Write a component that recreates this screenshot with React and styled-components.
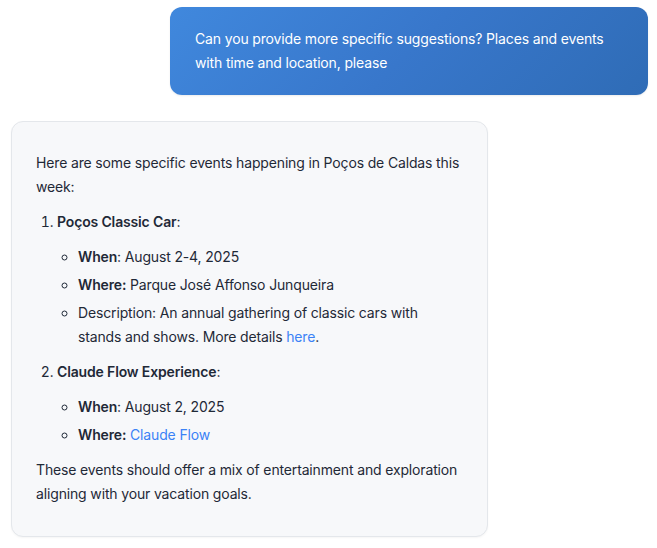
import styled, { createGlobalStyle } from 'styled-components'

const GlobalStyle = createGlobalStyle`
  html, body {
    margin: 0;
    padding: 0;
    background: #ffffff;
  }
  body {
    font-family: Inter, "Noto Sans", sans-serif;
    -webkit-font-smoothing: antialiased;
  }
`

const Thread = styled.div`
  display: flex;
  flex-direction: column;
  gap: 26px;
  padding: 7px 9px 12px 11px;
`

const Bubble = styled.div`
  box-sizing: border-box;
  width: ${(p) => (p.$user ? '478px' : '477px')};
  align-self: ${(p) => (p.$user ? 'flex-end' : 'flex-start')};
  border-radius: 12px;
  font-size: 14px;
  line-height: 24px;
  letter-spacing: -0.15px;
  ${(p) =>
    p.$user
      ? `
    padding: 20px 24px 20px 25px;
    color: #ffffff;
    background: linear-gradient(135deg, #4088dd 0%, #3877cb 50%, #2f6cb6 100%);
    box-shadow: 0 1px 2px rgba(0, 0, 0, 0.08);
  `
      : `
    padding: 29px 24px 30px 24px;
    color: #1f2937;
    background: #f7f8fa;
    border: 1px solid #e4e7eb;
    box-shadow: 0 1px 2px rgba(0, 0, 0, 0.04);
  `}
`

const Para = styled.p`
  margin: 0;
`

const Steps = styled.ol`
  margin: 11px 0;
  padding-left: 21px;

  > li + li {
    margin-top: 11px;
  }
`

const Details = styled.ul`
  margin: 11px 0;
  padding-left: 21px;
  list-style-type: circle;

  > li + li {
    margin-top: 4px;
  }
`

const Strong = styled.strong`
  font-weight: 600;
`

const Link = styled.a`
  color: #3b82f6;
  text-decoration: none;
`

export default function App() {
  return (
    <>
      <GlobalStyle />
      <Thread>
        <Bubble $user>
          Can you provide more specific suggestions? Places and events with time and
          location, please
        </Bubble>
        <Bubble>
          <Para>Here are some specific events happening in Poços de Caldas this week:</Para>
          <Steps>
            <li>
              <Strong>Poços Classic Car</Strong>:
              <Details>
                <li>
                  <Strong>When</Strong>: August 2-4, 2025
                </li>
                <li>
                  <Strong>Where:</Strong> Parque José Affonso Junqueira
                </li>
                <li>
                  Description: An annual gathering of classic cars with stands and shows.
                  More details <Link href="#">here</Link>.
                </li>
              </Details>
            </li>
            <li>
              <Strong>Claude Flow Experience</Strong>:
              <Details>
                <li>
                  <Strong>When</Strong>: August 2, 2025
                </li>
                <li>
                  <Strong>Where:</Strong> <Link href="#">Claude Flow</Link>
                </li>
              </Details>
            </li>
          </Steps>
          <Para>
            These events should offer a mix of entertainment and exploration aligning with
            your vacation goals.
          </Para>
        </Bubble>
      </Thread>
    </>
  )
}
